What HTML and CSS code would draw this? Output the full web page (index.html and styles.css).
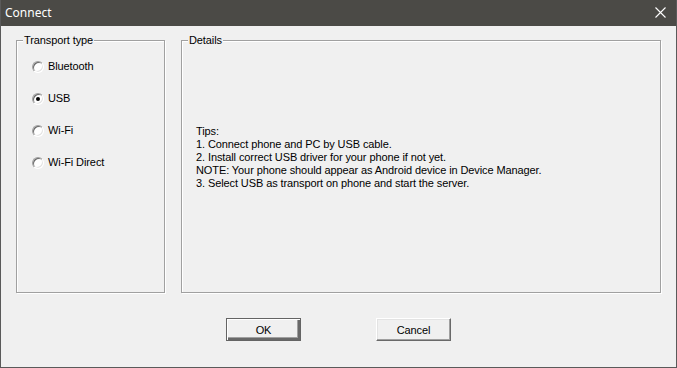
FILE: index.html
```html
<!DOCTYPE html>
<html lang="en">
<head>
    <meta charset="UTF-8">
    <title>Connect</title>
    <link rel="stylesheet" href="styles.css">
</head>
<body>
    <div class="window">
        <div class="titlebar">
            <span class="title">Connect</span>
            <svg class="close" width="11" height="11" viewBox="0 0 11 11">
                <path d="M0.5 0.5 L10.5 10.5 M10.5 0.5 L0.5 10.5" stroke="#fff" stroke-width="1.1" fill="none"/>
            </svg>
        </div>

        <div class="dialog">
            <div class="groups">
                <div class="group transport">
                    <span class="legend">Transport type</span>
                    <div class="radio-list">
                        <label class="radio"><span class="dot"></span>Bluetooth</label>
                        <label class="radio checked"><span class="dot"></span>USB</label>
                        <label class="radio"><span class="dot"></span>Wi-Fi</label>
                        <label class="radio"><span class="dot"></span>Wi-Fi Direct</label>
                    </div>
                </div>

                <div class="group details">
                    <span class="legend">Details</span>
                    <div class="tips">
                        <p>Tips:</p>
                        <p>1. Connect phone and PC by USB cable.</p>
                        <p>2. Install correct USB driver for your phone if not yet.</p>
                        <p>NOTE: Your phone should appear as Android device in Device Manager.</p>
                        <p>3. Select USB as transport on phone and start the server.</p>
                    </div>
                </div>
            </div>

            <div class="buttons">
                <button class="btn default">OK</button>
                <button class="btn">Cancel</button>
            </div>
        </div>
    </div>
</body>
</html>
```

FILE: styles.css
```css
html, body {
    margin: 0;
    padding: 0;
}
body {
    font-family: 'Liberation Sans', Arial, sans-serif;
    font-size: 11px;
    letter-spacing: -0.1px;
    color: #000;
    background: #f0f0f0;
}
.window {
    width: 677px;
    height: 368px;
    box-sizing: border-box;
    border: 1px solid #5a5a5a;
    border-top: none;
    background: #f0f0f0;
    display: flex;
    flex-direction: column;
}
.titlebar {
    height: 26px;
    background: #4b4a46;
    display: flex;
    align-items: center;
    justify-content: space-between;
    padding: 0 10px 0 4px;
    flex-shrink: 0;
}
.title {
    font-family: 'Noto Sans', 'Open Sans', sans-serif;
    font-size: 12px;
    letter-spacing: 0;
    color: #fff;
    margin-top: -1px;
}
.close {
    display: block;
    margin-top: -1px;
}
.dialog {
    flex: 1;
    display: flex;
    flex-direction: column;
}
.groups {
    display: flex;
    gap: 16px;
    margin: 14px 0 0 15px;
}
.group {
    height: 253px;
    box-sizing: border-box;
    border: 1px solid #a0a0a0;
    box-shadow: 1px 1px 0 #fff, inset 1px 1px 0 #fff;
}
.legend {
    display: block;
    width: max-content;
    margin: -7px 0 0 6px;
    padding: 0 1px;
    line-height: 13px;
    background: #f0f0f0;
}
.transport {
    width: 149px;
}
.details {
    width: 480px;
}
.radio-list {
    display: flex;
    flex-direction: column;
    gap: 19px;
    padding: 13px 0 0 15px;
}
.radio {
    display: flex;
    align-items: center;
    gap: 4px;
    height: 13px;
    line-height: 13px;
}
.dot {
    width: 12px;
    height: 12px;
    box-sizing: border-box;
    border-radius: 50%;
    background: #fff;
    border: 1px solid;
    border-color: #a0a0a0 #fff #fff #a0a0a0;
    box-shadow: inset 1px 1px 0 #696969, inset -1px -1px 0 #e3e3e3;
    display: flex;
    align-items: center;
    justify-content: center;
}
.checked .dot::after {
    content: "";
    width: 4px;
    height: 4px;
    border-radius: 50%;
    background: #000;
}
.tips {
    padding: 78px 0 0 14px;
}
.tips p {
    margin: 0;
    line-height: 13px;
}
.buttons {
    display: flex;
    justify-content: center;
    gap: 75px;
    margin-top: 25px;
}
.btn {
    width: 75px;
    height: 23px;
    box-sizing: border-box;
    padding: 0;
    font-family: inherit;
    font-size: 11px;
    letter-spacing: inherit;
    color: #000;
    background: #f0f0f0;
    border: 1px solid;
    border-color: #fff #696969 #696969 #fff;
    box-shadow: inset -1px -1px 0 #a0a0a0, inset 1px 1px 0 #e3e3e3;
}
.btn.default {
    border: 1px solid #646464;
    box-shadow: inset 1px 1px 0 #fff, inset -2px -2px 0 #696969, inset -3px -3px 0 #a0a0a0;
}
```
